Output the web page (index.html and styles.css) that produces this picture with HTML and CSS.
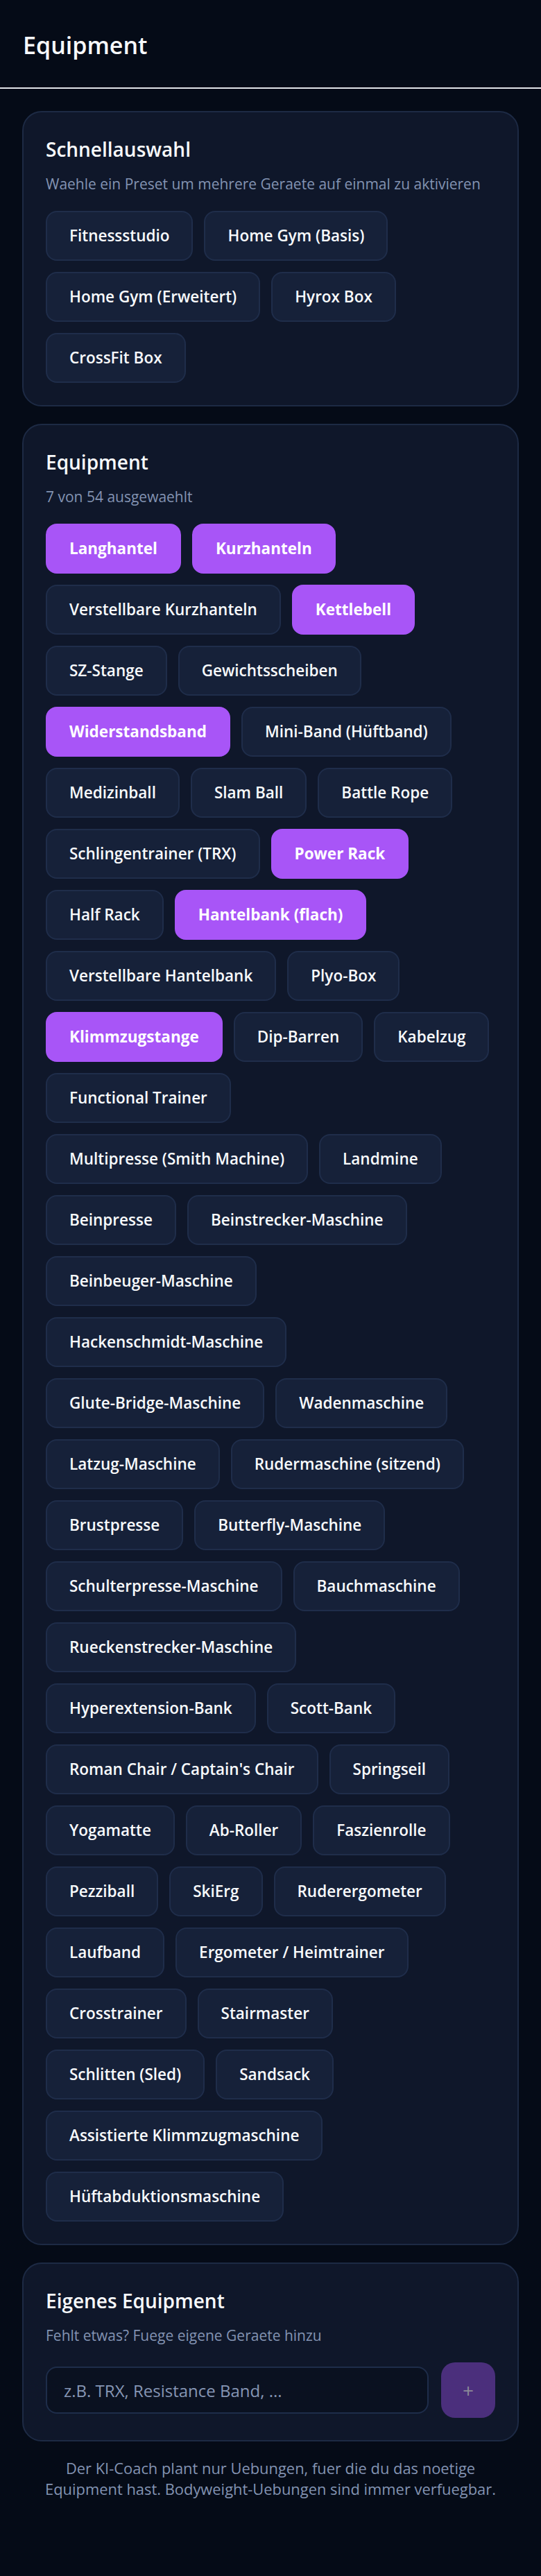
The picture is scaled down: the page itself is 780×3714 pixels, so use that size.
FILE: index.html
```html
<!DOCTYPE html>
<html lang="de">
<head>
  <meta charset="utf-8">
  <title>Equipment</title>
  <link rel="stylesheet" href="styles.css">
</head>
<body>
  <header class="topbar">
    <h1>Equipment</h1>
  </header>

  <main class="page">
    <section class="card">
      <h2>Schnellauswahl</h2>
      <p class="hint">Waehle ein Preset um mehrere Geraete auf einmal zu aktivieren</p>
      <div class="chips">
        <button class="chip">Fitnessstudio</button>
        <button class="chip">Home Gym (Basis)</button>
        <button class="chip">Home Gym (Erweitert)</button>
        <button class="chip">Hyrox Box</button>
        <button class="chip">CrossFit Box</button>
      </div>
    </section>

    <section class="card">
      <h2>Equipment</h2>
      <p class="hint" id="count">7 von 54 ausgewaehlt</p>
      <div class="chips" id="equipment"></div>
    </section>

    <section class="card">
      <h2>Eigenes Equipment</h2>
      <p class="hint">Fehlt etwas? Fuege eigene Geraete hinzu</p>
      <div class="add-row">
        <input class="add-input" type="text" placeholder="z.B. TRX, Resistance Band, ...">
        <button class="add-btn" disabled>+</button>
      </div>
    </section>

    <p class="note">Der KI-Coach plant nur Uebungen, fuer die du das noetige Equipment hast. Bodyweight-Uebungen sind immer verfuegbar.</p>
  </main>

  <script>
    // name, selected
    const equipment = [
      ['Langhantel', true], ['Kurzhanteln', true],
      ['Verstellbare Kurzhanteln'], ['Kettlebell', true],
      ['SZ-Stange'], ['Gewichtsscheiben'],
      ['Widerstandsband', true], ['Mini-Band (Hüftband)'],
      ['Medizinball'], ['Slam Ball'], ['Battle Rope'],
      ['Schlingentrainer (TRX)'], ['Power Rack', true],
      ['Half Rack'], ['Hantelbank (flach)', true],
      ['Verstellbare Hantelbank'], ['Plyo-Box'],
      ['Klimmzugstange', true], ['Dip-Barren'], ['Kabelzug'],
      ['Functional Trainer'],
      ['Multipresse (Smith Machine)'], ['Landmine'],
      ['Beinpresse'], ['Beinstrecker-Maschine'],
      ['Beinbeuger-Maschine'],
      ['Hackenschmidt-Maschine'],
      ['Glute-Bridge-Maschine'], ['Wadenmaschine'],
      ['Latzug-Maschine'], ['Rudermaschine (sitzend)'],
      ['Brustpresse'], ['Butterfly-Maschine'],
      ['Schulterpresse-Maschine'], ['Bauchmaschine'],
      ['Rueckenstrecker-Maschine'],
      ['Hyperextension-Bank'], ['Scott-Bank'],
      ["Roman Chair / Captain's Chair"], ['Springseil'],
      ['Yogamatte'], ['Ab-Roller'], ['Faszienrolle'],
      ['Pezziball'], ['SkiErg'], ['Ruderergometer'],
      ['Laufband'], ['Ergometer / Heimtrainer'],
      ['Crosstrainer'], ['Stairmaster'],
      ['Schlitten (Sled)'], ['Sandsack'],
      ['Assistierte Klimmzugmaschine'],
      ['Hüftabduktionsmaschine']
    ];

    const list = document.getElementById('equipment');
    equipment.forEach(([name, on]) => {
      const chip = document.createElement('button');
      chip.className = on ? 'chip is-active' : 'chip';
      chip.textContent = name;
      list.appendChild(chip);
    });

    const picked = equipment.filter(e => e[1]).length;
    document.getElementById('count').textContent = `${picked} von ${equipment.length} ausgewaehlt`;
  </script>
</body>
</html>
```

FILE: styles.css
```css
body {
  margin: 0;
  background: #050b17;
  color: #f8fafc;
  font-family: "Open Sans", "Noto Sans", sans-serif;
}

.topbar {
  padding: 42px 33px 38px;
  border-bottom: 2px solid #e2e4e8;
}

.topbar h1 {
  margin: 0;
  font-size: 34px;
  line-height: 46px;
  font-weight: 600;
}

.page {
  display: flex;
  flex-direction: column;
  gap: 25px;
  padding: 32px 32px 80px;
}

.card {
  background: #0f172a;
  border: 2px solid #1d2a44;
  border-radius: 28px;
  padding: 32px;
}

.card h2 {
  margin: 0 0 13px;
  font-size: 28px;
  line-height: 42px;
  font-weight: 600;
}

.hint {
  margin: 0 0 23px;
  font-size: 21px;
  line-height: 32px;
  color: #8393b2;
}

.chips {
  display: flex;
  flex-wrap: wrap;
  gap: 16px;
}

.chip {
  padding: 18px 32px;
  border: 2px solid #1f2d4a;
  border-radius: 16px;
  background: #162139;
  color: #f8fafc;
  font-family: inherit;
  font-size: 22.5px;
  line-height: 32px;
  font-weight: 600;
  cursor: pointer;
}

.chip.is-active {
  background: #a855f7;
  border-color: #a855f7;
  color: #fff;
  font-weight: 700;
}

.add-row {
  display: flex;
  align-items: center;
  gap: 18px;
}

.add-input {
  flex: 1;
  min-width: 0;
  height: 68px;
  box-sizing: border-box;
  padding: 0 24px;
  border: 2px solid #1e2d4a;
  border-radius: 16px;
  background: #0a1120;
  color: #f8fafc;
  font-family: inherit;
  font-size: 24px;
}

.add-input::placeholder {
  color: #8696b4;
}

.add-btn {
  width: 78px;
  height: 80px;
  border: none;
  border-radius: 20px;
  background: #a855f7;
  color: #fff;
  font-family: inherit;
  font-size: 28px;
  cursor: pointer;
}

.add-btn:disabled {
  background: #4b2f7c;
  color: #8b8a98;
  cursor: default;
}

.note {
  margin: -1px 0 0;
  padding: 0 32px;
  text-align: center;
  font-size: 21.9px;
  line-height: 30px;
  color: #8393b2;
}
```
